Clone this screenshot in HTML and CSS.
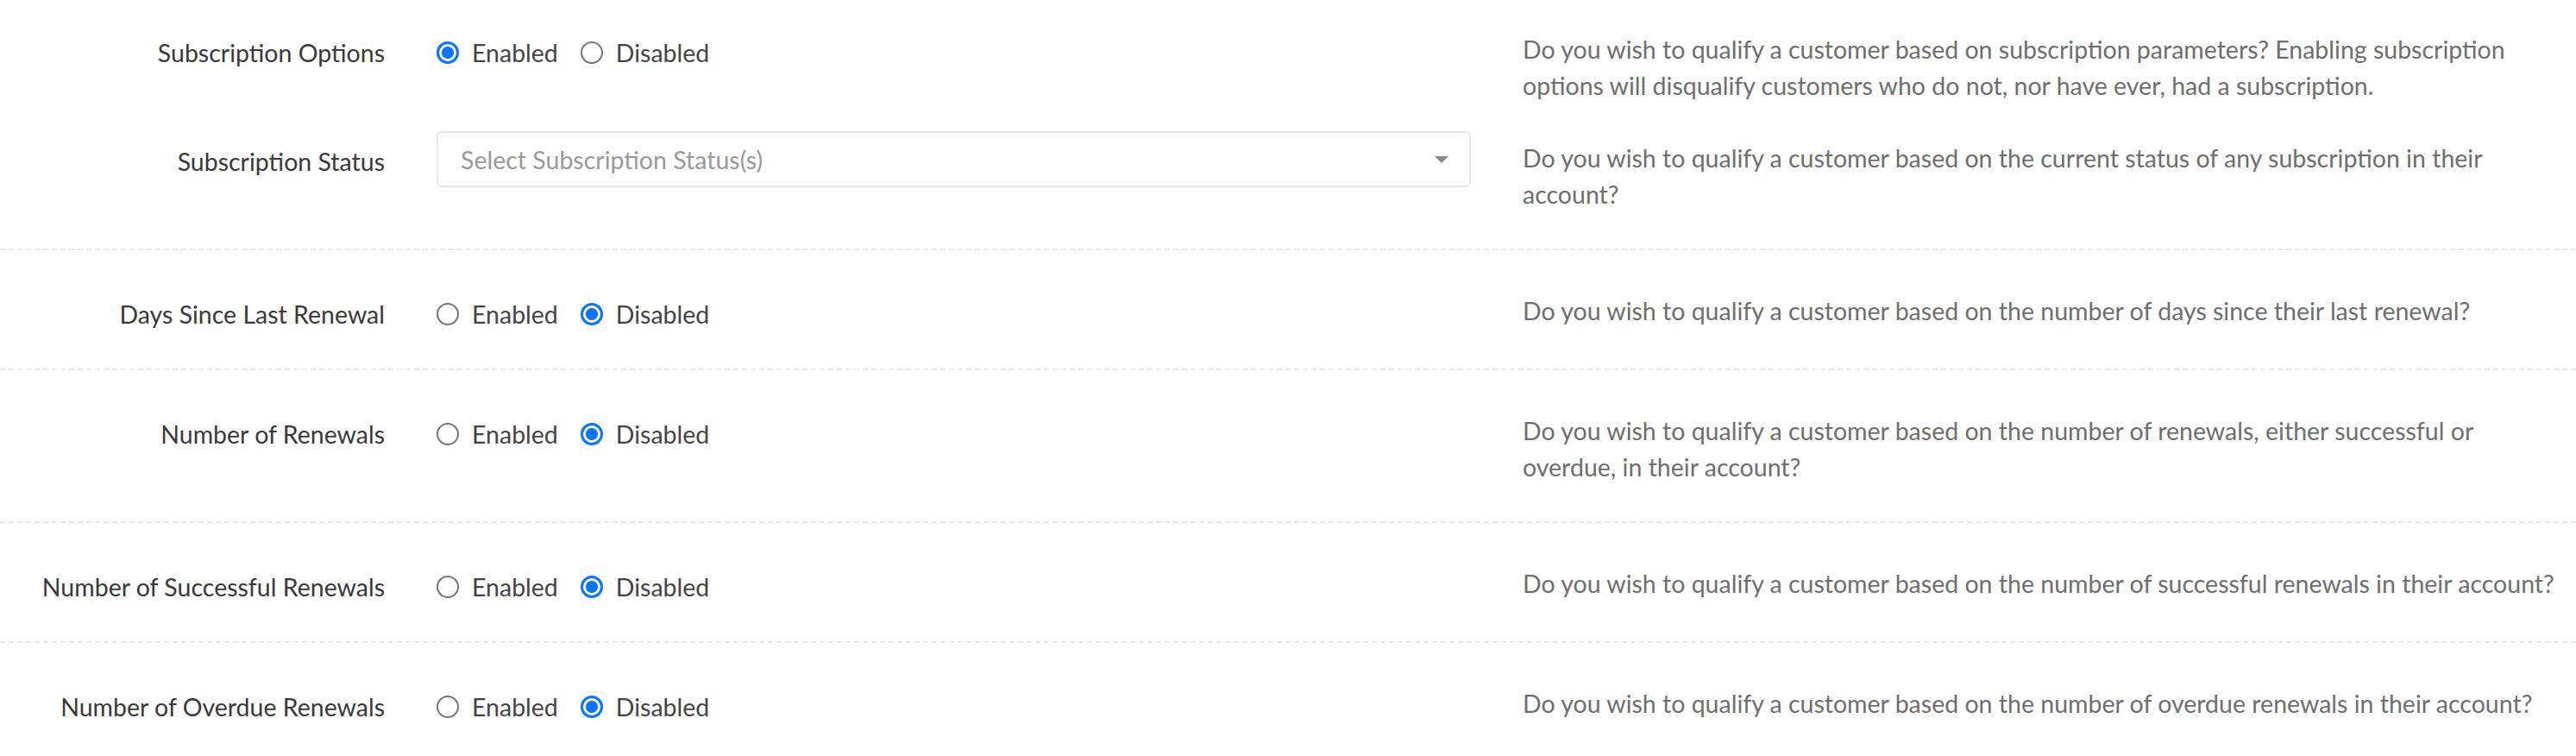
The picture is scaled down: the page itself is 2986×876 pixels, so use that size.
FILE: index.html
```html
<!DOCTYPE html>
<html>
  <head>
    <title>Subscription Qualifiers</title>
    <link rel="stylesheet" href="styles.css">
  </head>
  <body>
    <form class="qualifiers">
      <div class="section first">
        <div class="field">
          <label class="field-label">Subscription Options</label>
          <div class="choices">
            <label class="choice"><input type="radio" name="sub-options" checked> Enabled</label>
            <label class="choice"><input type="radio" name="sub-options"> Disabled</label>
          </div>
          <p class="help">Do you wish to qualify a customer based on subscription parameters? Enabling subscription options will disqualify customers who do not, nor have ever, had a subscription.</p>
        </div>
        <div class="field">
          <label class="field-label">Subscription Status</label>
          <div class="select">
            <span class="placeholder">Select Subscription Status(s)</span>
            <span class="arrow"></span>
          </div>
          <p class="help">Do you wish to qualify a customer based on the current status of any subscription in their account?</p>
        </div>
      </div>

      <div class="section">
        <div class="field">
          <label class="field-label">Days Since Last Renewal</label>
          <div class="choices">
            <label class="choice"><input type="radio" name="days-renewal"> Enabled</label>
            <label class="choice"><input type="radio" name="days-renewal" checked> Disabled</label>
          </div>
          <p class="help">Do you wish to qualify a customer based on the number of days since their last renewal?</p>
        </div>
      </div>

      <div class="section">
        <div class="field">
          <label class="field-label">Number of Renewals</label>
          <div class="choices">
            <label class="choice"><input type="radio" name="num-renewals"> Enabled</label>
            <label class="choice"><input type="radio" name="num-renewals" checked> Disabled</label>
          </div>
          <p class="help">Do you wish to qualify a customer based on the number of renewals, either successful or overdue, in their account?</p>
        </div>
      </div>

      <div class="section">
        <div class="field">
          <label class="field-label">Number of Successful Renewals</label>
          <div class="choices">
            <label class="choice"><input type="radio" name="ok-renewals"> Enabled</label>
            <label class="choice"><input type="radio" name="ok-renewals" checked> Disabled</label>
          </div>
          <p class="help">Do you wish to qualify a customer based on the number of successful renewals in their account?</p>
        </div>
      </div>

      <div class="section last">
        <div class="field">
          <label class="field-label">Number of Overdue Renewals</label>
          <div class="choices">
            <label class="choice"><input type="radio" name="late-renewals"> Enabled</label>
            <label class="choice"><input type="radio" name="late-renewals" checked> Disabled</label>
          </div>
          <p class="help">Do you wish to qualify a customer based on the number of overdue renewals in their account?</p>
        </div>
      </div>
    </form>
  </body>
</html>
```

FILE: styles.css
```css
body {
  margin: 0;
  background: #fff;
  font-family: "Lato", "Open Sans", sans-serif;
  font-size: 28.5px;
  line-height: 42px;
  color: #3a3a3a;
}

.section {
  padding: 39px 0 10px;
  border-bottom: 2px dashed #e6e8eb;
}

.section.first {
  padding-top: 26px;
}

.section.last {
  border-bottom: none;
}

.field {
  display: grid;
  grid-template-columns: 446px 1199px 1fr;
  column-gap: 60px;
  align-items: start;
  padding-right: 8px;
  margin-bottom: 32px;
}

.field-label {
  padding-top: 14px;
  text-align: right;
  color: #393939;
}

.choices {
  display: flex;
  align-items: center;
  gap: 26px;
  padding-top: 14px;
  color: #444;
}

.choice {
  display: flex;
  align-items: center;
  gap: 15px;
}

.choice input {
  appearance: none;
  -webkit-appearance: none;
  margin: 0;
  width: 26px;
  height: 26px;
  border: 2px solid #767676;
  border-radius: 50%;
  background: #fff;
}

.choice input:checked {
  border: 3px solid #0b74ff;
  background: radial-gradient(circle, #0b74ff 0 6.5px, #fff 7.5px);
}

.select {
  display: flex;
  align-items: center;
  justify-content: space-between;
  height: 65px;
  box-sizing: border-box;
  padding: 0 24px 0 26px;
  border: 2px solid #e4e7eb;
  border-radius: 6px;
}

.placeholder {
  color: #999;
}

.arrow {
  width: 0;
  height: 0;
  border-style: solid;
  border-width: 8px 8px 0;
  border-color: #888 transparent transparent;
}

.help {
  margin: 0;
  padding-top: 10px;
  color: #6e6e6e;
}
```
